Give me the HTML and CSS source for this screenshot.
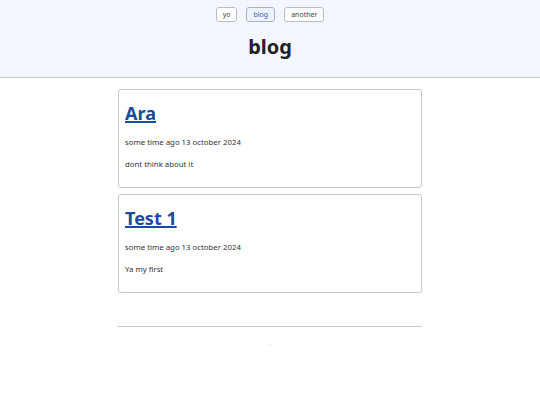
FILE: index.html
```html
<!DOCTYPE html>
<html>
<head>
<meta charset="utf-8">
<link rel="stylesheet" href="styles.css">
</head>
<body>
<header class="site-header">
  <nav class="nav">
    <a class="nav-btn" href="#">yo</a>
    <a class="nav-btn active" href="#">blog</a>
    <a class="nav-btn" href="#">another</a>
  </nav>
  <h1 class="page-title">blog</h1>
</header>
<main class="content">
  <article class="card">
    <h2 class="card-title"><a href="#">Ara</a></h2>
    <p class="meta">some time ago 13 october 2024</p>
    <p class="body">dont think about it</p>
  </article>
  <article class="card">
    <h2 class="card-title"><a href="#">Test 1</a></h2>
    <p class="meta">some time ago 13 october 2024</p>
    <p class="body">Ya my first</p>
  </article>
</main>
<footer class="footer">
  <hr class="rule">
  <p class="tiny">-_-</p>
</footer>
</body>
</html>
```
FILE: styles.css
```css
* { box-sizing: border-box; }
html, body { margin: 0; padding: 0; background: #fff; }
body {
  font-family: "Noto Sans", "Open Sans", sans-serif;
  color: #222;
}
.site-header {
  background: #f4f6fd;
  border-bottom: 1px solid #c4c8d0;
  height: 78px;
  padding-top: 7px;
  text-align: center;
}
.nav {
  display: flex;
  justify-content: center;
  gap: 9px;
}
.nav-btn {
  display: inline-block;
  height: 15px;
  line-height: 13px;
  font-size: 7px;
  padding: 0 6px;
  border: 1px solid #b9bcc2;
  border-radius: 3px;
  background: #fff;
  color: #444;
  text-decoration: none;
}
.nav-btn.active {
  border-color: #9fb2d6;
  background: #eef2fc;
  color: #3b5f9e;
}
.page-title {
  margin: 10px 0 0;
  font-size: 20px;
  line-height: 30px;
  font-weight: 700;
  color: #222;
}
.content {
  width: 304px;
  margin: 11px auto 0;
  display: flex;
  flex-direction: column;
  gap: 6px;
}
.card {
  border: 1px solid #c8c8c8;
  border-radius: 3px;
  padding: 6px 6px 10px;
  height: 99px;
}
.card-title {
  margin: 2px 0 0;
  font-size: 18px;
  line-height: 30px;
  font-weight: 700;
}
.card-title a {
  color: #1a4b9c;
  text-decoration: underline;
  text-decoration-thickness: 2px;
}
.meta, .body {
  font-size: 7.8px;
  line-height: 12px;
  margin: 0;
  color: #333;
}
.meta { margin-top: 8px; }
.body { margin-top: 10px; }
.footer {
  width: 304px;
  margin: 33px auto 0;
}
.rule {
  border: 0;
  border-top: 1px solid #c8c8c8;
  margin: 0;
}
.tiny {
  margin: 14px 0 0;
  text-align: center;
  font-size: 4px;
  color: #999;
}
```
